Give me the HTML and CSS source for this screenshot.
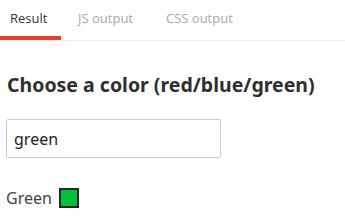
FILE: index.html
```html
<!DOCTYPE html>
<html>
<head>
<meta charset="utf-8">
<link rel="stylesheet" href="styles.css">
</head>
<body>
<nav class="tabs">
  <div class="tab active">Result</div>
  <div class="tab tab-js">JS output</div>
  <div class="tab tab-css">CSS output</div>
</nav>
<main class="content">
  <h1 class="title">Choose a color (red/blue/green)</h1>
  <input class="field" type="text" value="green">
  <div class="result">Green <span class="swatch"></span></div>
</main>
</body>
</html>
```
FILE: styles.css
```css
html, body { margin: 0; padding: 0; background: #fff; }
body { width: 345px; height: 223px; overflow: hidden; }
.tabs {
  display: flex;
  height: 40px;
  border-bottom: 1px solid #ececec;
  font-family: "Open Sans", sans-serif;
  font-size: 13px;
}
.tab {
  display: flex;
  align-items: center;
  box-sizing: border-box;
  padding-left: 17px;
  padding-bottom: 4px;
  color: #a8a8a8;
  white-space: nowrap;
}
.tab.active {
  width: 61px;
  padding-left: 10px;
  color: #333;
  box-shadow: inset 0 -4px 0 #f03c24;
}
.tab-js { width: 88px; }
.tab-css { width: 100px; }
.content {
  padding: 0 6px;
  font-family: "Noto Sans", "Open Sans", sans-serif;
  color: #333;
}
.title {
  margin: 31px 0 0 1px;
  font-size: 19.5px;
  font-weight: 700;
  line-height: 26px;
  color: #2f2f2f;
}
.field {
  display: block;
  margin-top: 21px;
  width: 215px;
  height: 39px;
  box-sizing: border-box;
  border: 1px solid #cccccc;
  border-radius: 2px;
  padding: 0 7px;
  font-family: "Noto Sans", sans-serif;
  font-size: 16px;
  color: #222;
  outline: none;
}
.result {
  margin-top: 29px;
  display: flex;
  align-items: center;
  gap: 7px;
  font-size: 16px;
  color: #444;
}
.swatch {
  width: 16px;
  height: 16px;
  background: #00c23a;
  border: 2px solid #1f2a1f;
  display: inline-block;
}
```
